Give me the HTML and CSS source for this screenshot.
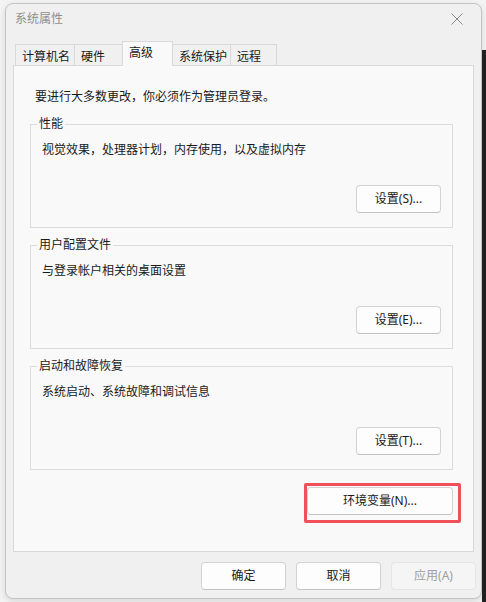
FILE: index.html
```html
<!DOCTYPE html>
<html lang="zh-CN">
<head>
<meta charset="utf-8">
<title>系统属性</title>
<link rel="stylesheet" href="styles.css">
</head>
<body>
<div class="desk-strip"></div>
<div class="window">
  <div class="titlebar">
    <span class="title">系统属性</span>
    <svg class="close" width="14" height="14" viewBox="0 0 14 14"><path d="M1.5 1.5L12.5 12.5M12.5 1.5L1.5 12.5" stroke="#8a8a8a" stroke-width="1" fill="none"/></svg>
  </div>
  <div class="tabs">
    <div class="tab t1">计算机名</div>
    <div class="tab t2">硬件</div>
    <div class="tab t3 active">高级</div>
    <div class="tab t4">系统保护</div>
    <div class="tab t5">远程</div>
  </div>
  <div class="panel">
    <div class="intro">要进行大多数更改，你必须作为管理员登录。</div>
    <div class="group first">
      <div class="legend">性能</div>
      <div class="desc">视觉效果，处理器计划，内存使用，以及虚拟内存</div>
      <div class="btn-row"><button class="btn">设置(S)...</button></div>
    </div>
    <div class="group">
      <div class="legend">用户配置文件</div>
      <div class="desc">与登录帐户相关的桌面设置</div>
      <div class="btn-row"><button class="btn">设置(E)...</button></div>
    </div>
    <div class="group">
      <div class="legend">启动和故障恢复</div>
      <div class="desc">系统启动、系统故障和调试信息</div>
      <div class="btn-row"><button class="btn">设置(T)...</button></div>
    </div>
    <div class="env-row">
      <div class="env-wrap">
        <button class="btn env">环境变量(N)...</button>
        <div class="highlight"></div>
      </div>
    </div>
  </div>
  <div class="footer">
    <button class="btn foot">确定</button>
    <button class="btn foot">取消</button>
    <button class="btn foot disabled">应用(A)</button>
  </div>
</div>
</body>
</html>
```
FILE: styles.css
```css
* { box-sizing: border-box; }
html, body { margin: 0; padding: 0; }
body {
  width: 486px;
  height: 602px;
  overflow: hidden;
  background: #f3f3f3;
  position: relative;
  font-family: "Noto Sans", "Noto Sans CJK SC", sans-serif;
  font-size: 12px;
  line-height: 16px;
  color: #1a1a1a;
  padding: 3px 0 0 5px;
}
.desk-strip {
  position: absolute;
  right: 0;
  top: 50px;
  width: 4px;
  height: 552px;
  background: #202020;
}
.window {
  width: 477px;
  height: 596px;
  background: #f0f0f0;
  border: 1px solid #c4c4c4;
  border-radius: 8px;
  box-shadow: 0 2px 6px rgba(0,0,0,0.12);
  display: flex;
  flex-direction: column;
}
.titlebar {
  height: 38px;
  display: flex;
  align-items: flex-start;
  justify-content: space-between;
  padding: 7px 17px 0 9px;
}
.title { color: #8f8f8f; font-size: 12px; }
.close { margin-top: 1px; }
.tabs {
  display: flex;
  align-items: flex-end;
  padding-left: 9px;
  height: 24px;
  margin-bottom: -1px;
  position: relative;
  z-index: 1;
}
.tab {
  height: 22px;
  border: 1px solid #d9d9d9;
  border-bottom-color: #d9d9d9;
  margin-left: -1px;
  padding: 4px 0 0 6px;
  background: #f0f0f0;
  white-space: nowrap;
}
.t1 { width: 60px; margin-left: 0; }
.t2 { width: 49px; }
.t3 { width: 51px; }
.t4 { width: 59px; }
.t5 { width: 47px; }
.tab.active {
  height: 25px;
  background: #f9f9f9;
  border-bottom-color: #f9f9f9;
  padding-top: 3px;
}
.panel {
  margin-left: 7px;
  width: 461px;
  height: 487px;
  background: #f9f9f9;
  border: 1px solid #d9d9d9;
  padding: 23px 20px 0 16px;
}
.intro { margin-left: 5px; }
.group {
  margin-top: 17px;
  height: 104px;
  border: 1px solid #dcdcdc;
  display: flex;
  flex-direction: column;
  padding: 0 11px 14px 11px;
}
.group.first { margin-top: 19px; }
.legend {
  margin-top: -9px;
  margin-left: -5px;
  width: fit-content;
  padding: 0 2px;
  background: #f9f9f9;
}
.desc { margin-top: 10px; }
.btn-row {
  margin-top: auto;
  display: flex;
  justify-content: flex-end;
}
.btn {
  font: inherit;
  color: #1a1a1a;
  background: #fdfdfd;
  border: 1px solid #d3d3d3;
  border-bottom-color: #c2c2c2;
  border-radius: 4px;
  height: 28px;
  width: 85px;
  padding: 0;
}
.env-row {
  margin-top: 17px;
  display: flex;
  justify-content: flex-end;
}
.env-wrap { position: relative; }
.btn.env { width: 146px; display: block; }
.highlight {
  position: absolute;
  left: -3px;
  top: -4px;
  right: -8px;
  bottom: -8px;
  border: 3px solid #f0505a;
  border-radius: 2px;
  pointer-events: none;
}
.footer {
  margin-top: 10px;
  display: flex;
  justify-content: flex-end;
  gap: 10px;
  padding-right: 5px;
}
.btn.foot { width: 85px; }
.btn.disabled {
  background: #f5f5f5;
  border-color: #e5e5e5;
  color: #a0a0a0;
}
```
